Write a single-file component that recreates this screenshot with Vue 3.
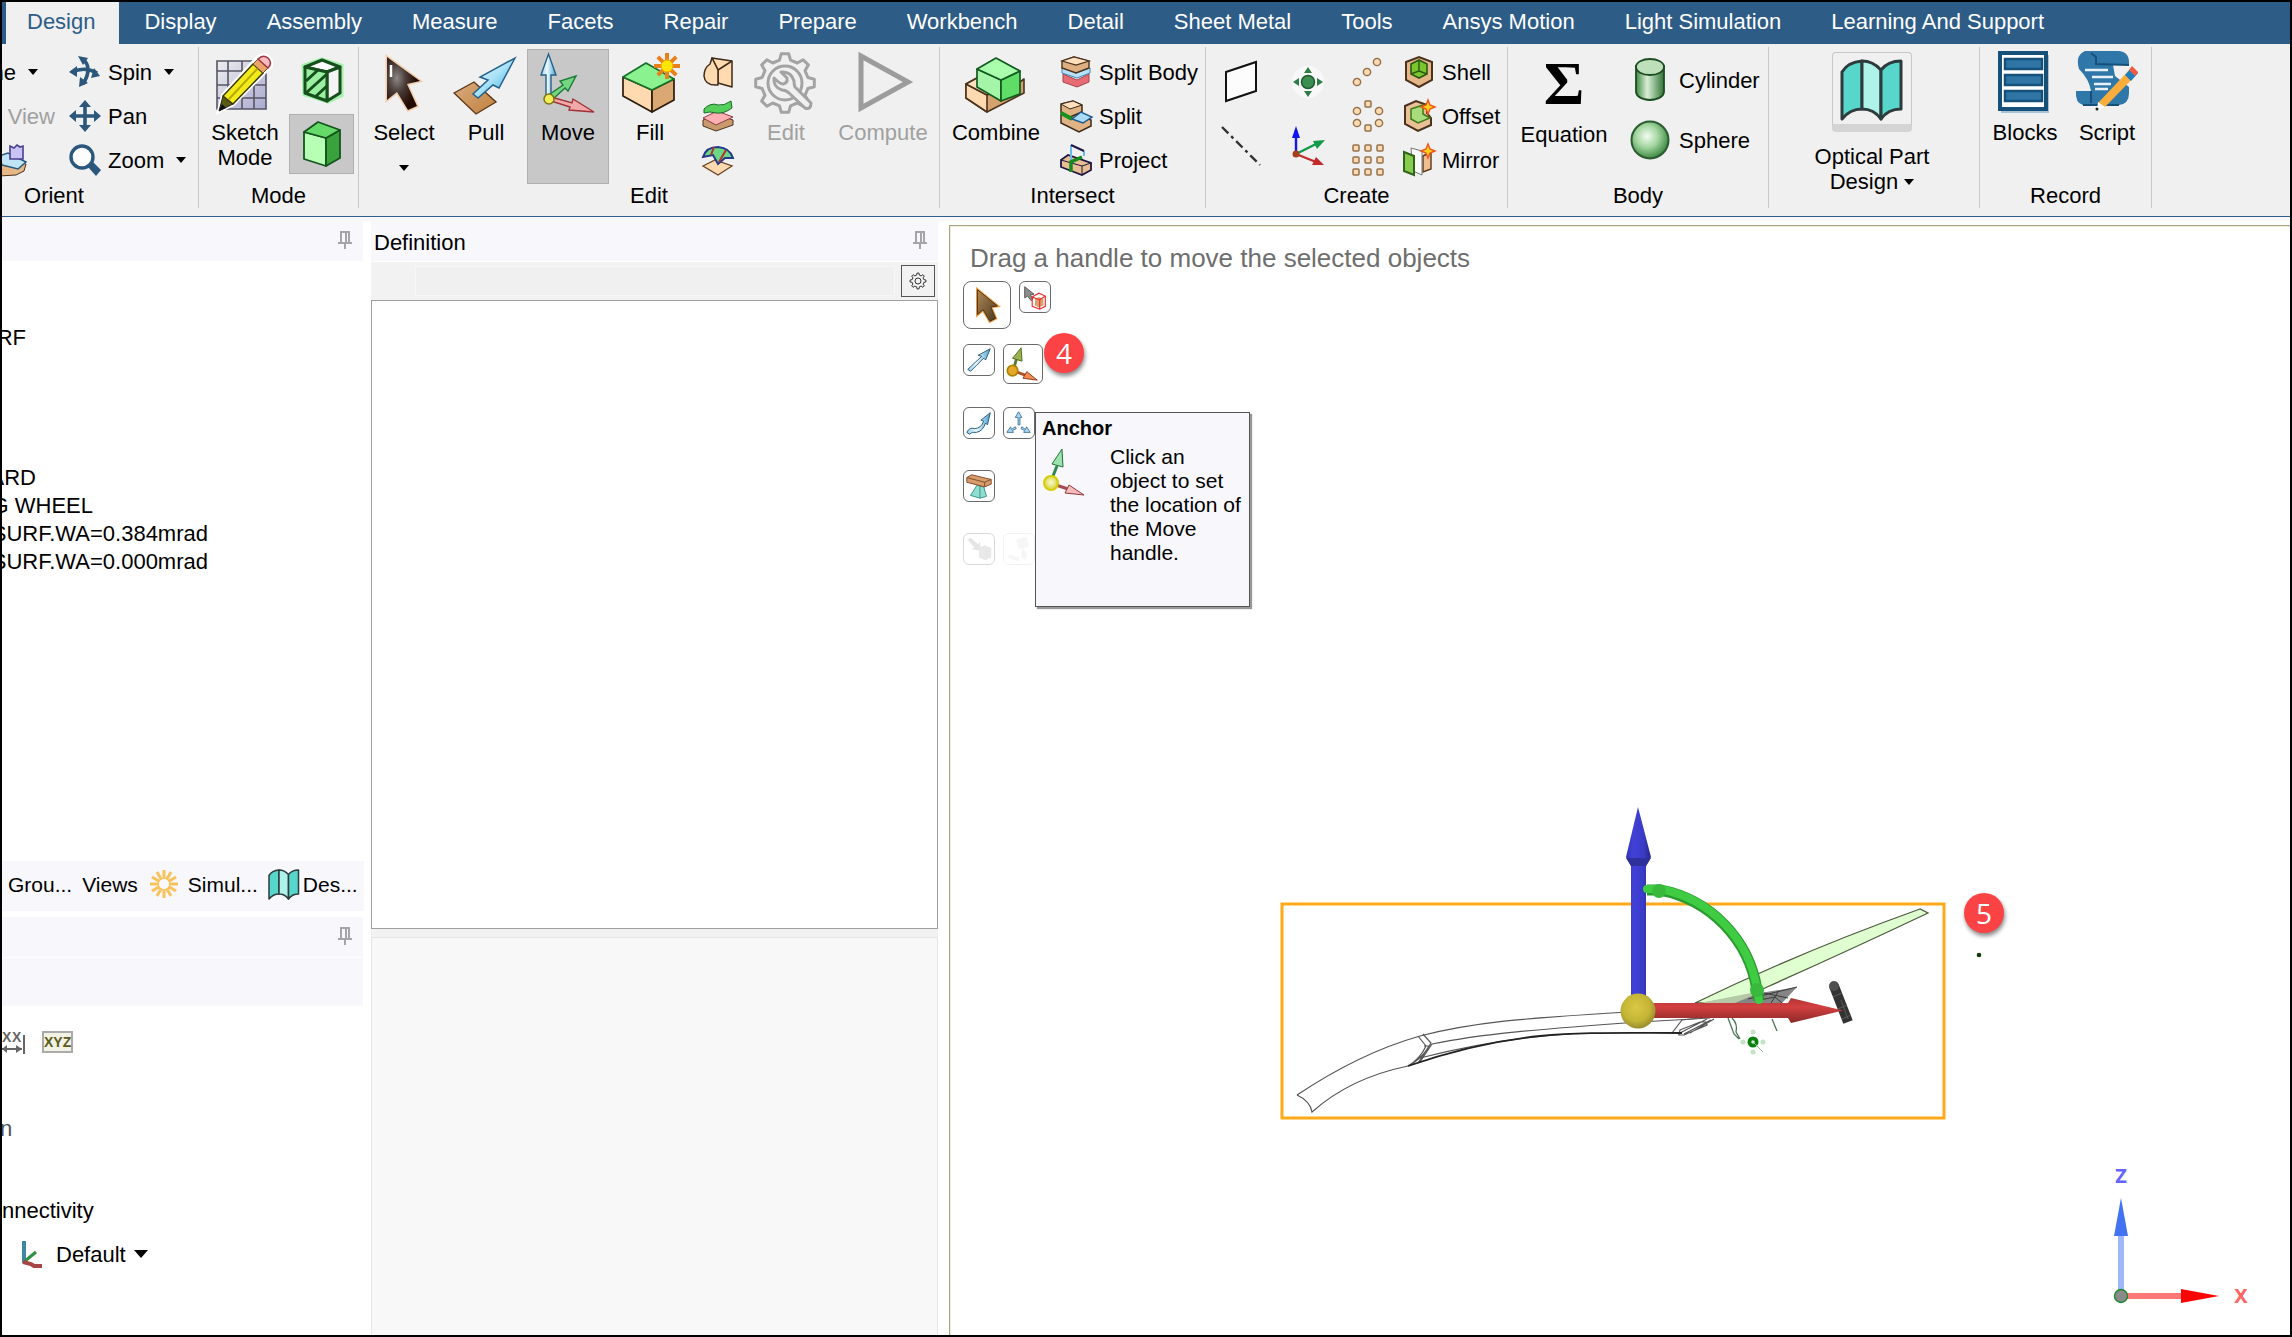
<script setup>
const tabs = [
  'Design', 'Display', 'Assembly', 'Measure', 'Facets', 'Repair', 'Prepare', 'Workbench',
  'Detail', 'Sheet Metal', 'Tools', 'Ansys Motion', 'Light Simulation', 'Learning And Support',
]

// Tree rows scroll off to the left; each entry knows where its text ends.
const tree = [
  { text: 'RF', end: 24, gap: true },
  { text: 'ARD', end: 34 },
  { text: 'G WHEEL', end: 91 },
  { text: 'SURF.WA=0.384mrad', end: 206 },
  { text: 'SURF.WA=0.000mrad', end: 206 },
]

function gear(cx, cy, outer, inner, teeth) {
  const pts = []
  const step = (Math.PI * 2) / teeth
  for (let i = 0; i < teeth; i++) {
    const a = i * step - Math.PI / 2
    const marks = [[-0.3, inner], [-0.16, outer], [0.16, outer], [0.3, inner]]
    for (const [k, r] of marks) {
      pts.push(`${(cx + r * Math.cos(a + k * step)).toFixed(1)} ${(cy + r * Math.sin(a + k * step)).toFixed(1)}`)
    }
  }
  return `M${pts.join('L')}Z`
}

function burst(cx, cy, r0, r1, rays) {
  let d = ''
  for (let i = 0; i < rays; i++) {
    const a = (i * Math.PI * 2) / rays
    d += `M${(cx + r0 * Math.cos(a)).toFixed(1)} ${(cy + r0 * Math.sin(a)).toFixed(1)}L${(cx + r1 * Math.cos(a)).toFixed(1)} ${(cy + r1 * Math.sin(a)).toFixed(1)}`
  }
  return d
}

const dots = (list, shape) => list.map(([x, y]) => shape === 'o'
  ? `<circle cx="${x}" cy="${y}" r="3.6"/><path d="M${x} ${y - 2.5}v5M${x - 2.5} ${y}h5" stroke="#ffd9b0"/>`
  : `<rect x="${x - 3}" y="${y - 3}" width="6" height="6" rx="1"/>`).join('')

const star = '<path d="M25 0l2 5 5 2-5 2-2 5-2-5-5-2 5-2z" fill="#ffd21c" stroke="#f2541b" stroke-width="1.4"/>'

const foldMap = '<g stroke="#2e3b3c" stroke-width="3" stroke-linejoin="round"><path d="M2 62V15Q8 5 22 4V52Q10 52 2 62Z" fill="#57d6cb"/><path d="M22 4Q33 4 41 13V62Q34 52 22 52Z" fill="#aef2ea"/><path d="M41 13Q48 4 61 4V52Q48 52 41 62Z" fill="#57d6cb"/></g>'

// 64 x 64 drawings
const big = {
  sketch: `<rect x="4" y="10" width="49" height="48" fill="url(#grid)"/><path d="M4 10h49v48H4zM15 10v48M29 10v48M41 10v48M4 20h49M4 34h49M4 47h49" fill="none" stroke="#555566" stroke-width="1.6"/><path d="M6 60L10 44 45 6Q54 1 58 10L58 15 20 53Z" fill="#fff" stroke="#fff" stroke-width="4"/><path d="M6 60L10 45 20 53Z" fill="#5c5a12" stroke="#222"/><path d="M10 45L40 13 50 22 20 53Z" fill="#f2ea1a" stroke="#3a3a00" stroke-width="1.5"/><path d="M16 48L45 17" stroke="#b5a800" stroke-width="2"/><path d="M40 13L45 8 55 17 50 22Z" fill="#e8a668" stroke="#6a4a2a"/><path d="M45 8Q50 3 55 7 60 12 55 17Z" fill="#f6bcc0" stroke="#a03540" stroke-width="1.5"/><path d="M6 60l3-7 4 4z" fill="#111"/>`,
  select: `<path d="M15 6V49L25 41 36 59 45 55 35 33 48 30Z" fill="url(#cursor)" stroke="#f3cfae" stroke-width="3"/><path d="M15 6V49L25 41 36 59 45 55 35 33 48 30Z" fill="url(#cursor)"/><path d="M19 14v12" stroke="#fff" stroke-width="2.5"/>`,
  pull: `<path d="M0 42L20 31 42 51 22 63Z" fill="url(#plate)" stroke="#5b3718" stroke-width="1.4"/><path d="M61 7L45 37 39 34 24 47 19 43 34 29 26 26Z" fill="url(#sky)" stroke="#24618c" stroke-width="1.5"/>`,
  move: `<path d="M10 46V24H5L12.500 3 20 24H15V46Z" fill="url(#skyH)" stroke="#276087" stroke-width="1.4"/><path d="M14 43L27 34 24 30 40 25 32 40 29 37 17 48Z" fill="#74d683" stroke="#1e7a38" stroke-width="1.4"/><path d="M15 46L36 52 37 48 58 61 33 59 34 56 15 50Z" fill="#f2a9a9" stroke="#a03238" stroke-width="1.4"/><circle cx="13" cy="48" r="5" fill="#f3ee58" stroke="#7c7614" stroke-width="1.5"/>`,
  fill: `<g stroke="#2d1c0c" stroke-width="1.7" stroke-linejoin="round"><path d="M5 26L34 39V61L5 45Z" fill="#ffd9b0"/><path d="M34 39L56 28V49L34 61Z" fill="#d9a873"/><path d="M5 26L28 12 56 28 34 39Z" fill="#8af28f" stroke="#17702a"/></g><path d="${burst(49, 15, 3, 13, 8)}" stroke="#e8811c" stroke-width="4"/><circle cx="49" cy="15" r="6" fill="#ffe600" stroke="#f6a400"/>`,
  gear: `<g fill="none" stroke="#a3a3a3" stroke-width="3" stroke-linejoin="round"><path d="${gear(31, 32, 29.500, 23.500, 8)}"/><circle cx="31" cy="32" r="17"/></g><path d="M20 27Q19 36 28 39 32 39 35 42L51 57Q57 59 57 52L41 36Q40 34 40 30 37 20 27 21L33 27Q34 32 29 33Q26 33 20 27Z" fill="#f0f0f0" stroke="#a3a3a3" stroke-width="3" stroke-linejoin="round"/>`,
  compute: `<path d="M10 5V57L57 31Z" fill="none" stroke="#9c9c9c" stroke-width="5"/>`,
  combine: `<g stroke="#4b321c" stroke-width="1.6" stroke-linejoin="round"><path d="M2 33L13 27 44 40 60 28V42L23 61 2 47Z" fill="#d3a26e"/><path d="M2 33L23 44V61L2 47Z" fill="#ffd9b0"/><path d="M2 33L13 27 37 38 23 44Z" fill="#ffe0bf"/></g><g stroke="#125a20" stroke-width="1.7" stroke-linejoin="round"><path d="M13 18L37 29V50L13 36Z" fill="#a5f5a8"/><path d="M37 29L56 20V43L37 50Z" fill="#5fdd66"/><path d="M13 18L32 7 56 20 37 29Z" fill="#a9ffac"/></g>`,
  map: foldMap,
  blocks: `<path d="M8 4h48v58H8z" fill="#a9c3d4"/><rect x="7" y="2" width="46" height="56" fill="#fff" stroke="#14507a" stroke-width="4"/><g fill="#2f74a5" stroke="#14507a" stroke-width="2.500"><rect x="12" y="8" width="37" height="10"/><rect x="12" y="24" width="37" height="10"/><rect x="12" y="40" width="37" height="10"/></g>`,
  script: `<path d="M10 0H44Q55 1 54 14H38L40 25 54 36V42Q54 53 44 54H8Q0 52 1 40H16Q14 28 4 18 0 4 10 0Z" fill="#2f77a8"/><path d="M16 2L21 6V13L54 14M16 40V52M8 54H44" fill="none" stroke="#14507a" stroke-width="2"/><path d="M10 19H33M17 26H38M19 33H36M20 38H33" stroke="#e8f1f7" stroke-width="2.500"/><path d="M57 16L63 22 30 56 23 52Z" fill="#fbad3c"/><path d="M50 24L57 16 63 22 56 30Z" fill="#1c7fbf"/><path d="M54 19L57 15 63 21 60 25Z" fill="#f25c45"/><path d="M23 51L30 56 22 59Z" fill="#fff"/><circle cx="22" cy="58" r="1.500" fill="#222"/>`,
}

// 32 x 32 drawings
const small = {
  spin: `<g fill="none" stroke="#2b577d" stroke-width="3.600"><path d="M3 16Q16 10 28 17M14 3Q24 12 14 28"/></g><path d="M0 16l8-6v11zM31 20l-9 2 3-10zM9 0l10 2-5 7zM10 31l1-10 8 6z" fill="#2b577d"/>`,
  pan: `<path d="M16 4V28M4 16H28" stroke="#2b577d" stroke-width="3.600"/><path d="M16 0l6 7H10zM16 32l6-7H10zM0 16l7-6v12zM32 16l-7-6v12z" fill="#2b577d"/>`,
  zoom: `<path d="M20 20l4-2 8 8-5 6-8-9z" fill="#2b577d"/><circle cx="13" cy="13" r="11" fill="#fdfdfe" stroke="#2b577d" stroke-width="3.400"/>`,
  snap: `<path d="M0 22L8 15 30 20 28 27 20 31 3 32Z" fill="#e6b887" stroke="#4b321c"/><path d="M3 12L12 9 30 18 22 25 6 21Z" fill="#bfe4f7" stroke="#27587a" stroke-width="1.500"/><path d="M14 15V2L18 4 21 1 24 3 27 2V15Z" fill="#c9c3f5" stroke="#49408f" stroke-width="1.600"/>`,
  blend: `<g fill="#ffd9b0" stroke="#3c2a18" stroke-width="1.500" stroke-linejoin="round"><path d="M10 2L30 5V31L16 27V14Z"/><path d="M10 2L8 8Q2 12 2 20 3 30 16 29V14Z"/><path d="M16 14L30 5"/></g>`,
  lift: `<path d="M1 20L14 14 31 20V25L14 31 1 26Z" fill="#c99a6d" stroke="#4b321c"/><path d="M1 18L15 11 31 17 14 25Z" fill="#ffb0b4" stroke="#8f3b40"/><path d="M2 9Q9 2 16 5 22 6 29 1L30 8Q22 14 14 13 8 11 2 13Z" fill="#54cf5a" stroke="#1c6a2a"/>`,
  drape: `<path d="M1 22L13 16 30 22 16 31Z" fill="#ffd9b0" stroke="#6b4423" stroke-width="1.300"/><path d="M1 13Q4 3 16 3 28 4 31 14L23 14 16 20 11 11Z" fill="#6bd884" stroke="#243a8c" stroke-width="2"/><path d="M9 11L12 3M17 18L24 6" stroke="#b3302f" stroke-width="2"/>`,
  splitBody: `<path d="M3 18L17 24 29 18V26L17 31 3 26Z" fill="#e86b74" stroke="#a4444c"/><path d="M2 11L16 17 30 12V17L17 22 2 17Z" fill="#b8e2fa" stroke="#3c86b5"/><path d="M2 5L14 1 29 5V12L16 17 2 12Z" fill="#deb081" stroke="#4b321c" stroke-width="1.400"/><path d="M2 5L14 1 29 5 16 9Z" fill="#ffdfbc" stroke="#4b321c" stroke-width="1.200"/>`,
  split: `<path d="M1 15L10 12 31 20V26L19 32 1 23Z" fill="#e0b384" stroke="#3c2a18" stroke-width="1.500"/><path d="M1 4L13 1 22 5V12L10 17 1 13Z" fill="#e0b384" stroke="#3c2a18" stroke-width="1.500"/><path d="M1 4L13 1 22 5 10 9Z" fill="#ffdfbc" stroke="#3c2a18"/><path d="M1 13l11 6" stroke="#14921d" stroke-width="4"/><path d="M12 19L21 12 32 17 23 23Z" fill="#a8dcfa" stroke="#20588a" stroke-width="1.500"/>`,
  project: `<path d="M1 16L8 11 31 19V26L22 31 1 23Z" fill="#e8bd91" stroke="#1d1742" stroke-width="1.800"/><path d="M22 22V31M22 22L31 19M1 16L22 22" stroke="#1d1742" fill="none"/><path d="M11 1V16M24 7V12" fill="none" stroke="#67b9ee" stroke-width="2"/><path d="M11 1L24 7" stroke="#1d1742" stroke-width="2"/><path d="M11 28V18L22 13" fill="none" stroke="#128a20" stroke-width="3.500"/>`,
  patLine: `<g fill="#ffd9b0" stroke="#94714c" stroke-width="1.500">${dots([[5, 26], [15, 16], [25, 6]], 'o')}</g>`,
  patCircle: `<g fill="#ffd9b0" stroke="#94714c" stroke-width="1.500">${dots([[16, 4], [16, 28]], 's')}${dots([[5, 11], [27, 11], [5, 23], [27, 23]], 'o')}</g>`,
  patGrid: `<g fill="#ffd9b0" stroke="#94714c" stroke-width="1.500">${dots([[4, 4], [16, 4], [28, 4], [4, 16], [16, 16], [28, 16], [4, 28], [16, 28], [28, 28]], 's')}</g>`,
  shell: `<path d="M3 6L16 1 29 6V24L16 31 3 24Z" fill="#e5b788" stroke="#4b321c" stroke-width="2"/><path d="M8 8L16 4 24 8V18L16 22 8 18Z" fill="#7ac62f" stroke="#2b5a10" stroke-width="1.600"/><path d="M16 4V15L8 18M16 15L24 18" fill="none" stroke="#2b5a10" stroke-width="1.400"/>`,
  offset: `<path d="M2 6L13 1 24 5V13L28 18V25L15 31 2 24Z" fill="#eac095" stroke="#4b321c" stroke-width="2"/><path d="M8 9L20 5V14L27 18 15 23 8 19Z" fill="#a8dc7c" stroke="#3f7a1a" stroke-width="1.500"/>${star}`,
  mirror: `<path d="M20 12L28 8V25L20 28Z" fill="#f0bf91" stroke="#5b3718" stroke-width="1.400"/><path d="M8 4L19 7V31L10 27Z" fill="#fafafa" stroke="#777"/><path d="M1 8L11 12V31L1 27Z" fill="#86cc4f" stroke="#2f641a" stroke-width="2"/>${star}`,
}

// 44 x 48 drawings
const mid = {
  section: `<path d="M4 9L22 3 41 9V38L28 44 5 37Z" fill="none" stroke="#a5f0ac" stroke-width="5"/><g stroke="#164f1c" stroke-width="3" stroke-linejoin="round"><path d="M5 10L22 3 40 10 27 15Z" fill="#fff"/><path d="M27 15L40 10V36L27 44Z" fill="#f4f4f4"/><path d="M5 10L27 15V44L5 36Z" fill="#9af0a0"/><path d="M6 24L18 13M6 36L27 17M15 40L27 29"/></g>`,
  solid: `<g stroke="#14541c" stroke-width="1.800" stroke-linejoin="round"><path d="M4 12L26 18V46L4 39Z" fill="#b6ffb4"/><path d="M26 18L40 10V38L26 46Z" fill="#3aa23c"/><path d="M4 12L18 2 40 10 26 18Z" fill="#66da68"/></g>`,
  plane: `<path d="M7 14L37 4V33L7 43Z" fill="#fcfcfc" stroke="#111" stroke-width="2"/>`,
  axis: `<path d="M3 5L41 43" stroke="#333" stroke-width="2.400" stroke-dasharray="9 4 3 4"/>`,
  point: `<circle cx="22" cy="24" r="16" fill="#f8f8f8"/><circle cx="22" cy="24" r="6.500" fill="#3d8f51" stroke="#1e5c30" stroke-width="1.500"/><path d="M22 9l4 6h-8zM22 39l4-6h-8zM7 24l6-4v8zM37 24l-6-4v8z" fill="#2f7d46"/>`,
  origin: `<path d="M10 32V8" stroke="#1414f0" stroke-width="2.400"/><path d="M10 4l4 12H6z" fill="#1414f0"/><path d="M10 32L32 21" stroke="#12994a" stroke-width="2.400"/><path d="M39 18L31 27 27 19Z" fill="#12994a"/><path d="M10 32L30 40" stroke="#c22a2c" stroke-width="2.400"/><path d="M38 43L26 43 30 35Z" fill="#c22a2c"/><circle cx="10" cy="32" r="3.500" fill="#a6401a"/>`,
  cylinder: `<path d="M8 10V36Q9 43 22 44 35 43 36 36V10Z" fill="url(#tube)" stroke="#1c4d22" stroke-width="1.800"/><ellipse cx="22" cy="11" rx="14" ry="8" fill="#bfdfba" stroke="#1c4d22" stroke-width="1.800"/>`,
  sphere: `<circle cx="22" cy="24" r="18.500" fill="url(#ball)" stroke="#2b5c30" stroke-width="2"/>`,
}

const rows = (list) => list.map(([icon, label, menu]) => ({ icon, label, menu }))
const orient = rows([['spin', 'Spin', true], ['pan', 'Pan', false], ['zoom', 'Zoom', true]])
const intersect = rows([['splitBody', 'Split Body'], ['split', 'Split'], ['project', 'Project']])
const modify = rows([['shell', 'Shell'], ['offset', 'Offset'], ['mirror', 'Mirror']])

// Tool guides of the Move tool, row by row
const guides = [
  [
    { name: 'Select', size: 'lg', box: '0 0 48 48', art: '<path d="M14 8V34L20 29 27 41 33 38 28 26 35 25Z" fill="#8b6a3e" stroke="#f0a04b" stroke-width="3"/><path d="M14 8V34L20 29 27 41 33 38 28 26 35 25Z" fill="url(#bronze)" stroke="#4b3010"/>' },
    { name: 'Select component', size: 'sm', box: '0 0 32 32', art: '<path d="M5 5V17L8 15 12 20 14 18 11 14 15 13Z" fill="#8c8c8c" stroke="#555"/><path d="M16 18L20 16 25 18V25L20 27 16 25Z" fill="#d9a070"/><path d="M13 16L20 12 27 15V26L21 29 13 26ZM13 16L21 19 27 15M21 19V29" fill="none" stroke="#ee2b2b" stroke-width="1.200"/>' },
  ],
  [
    { name: 'Move direction', size: 'sm', box: '0 0 32 32', art: '<path d="M4 26L19 12 15 11 28 4 23 16 21 14 7 28Z" fill="url(#skyH)" stroke="#27587a"/>' },
    { name: 'Anchor', size: 'md', box: '0 0 40 40', art: '<path d="M10 26L13 15" stroke="#557a30" stroke-width="3"/><path d="M18 3L19 17 9 14Z" fill="#9fae4f" stroke="#476b23"/><path d="M12 28L23 32" stroke="#b0512a" stroke-width="3"/><path d="M35 37L20 35 24 28Z" fill="#ef8a52" stroke="#8f3b1c"/><circle cx="9" cy="27" r="5.500" fill="#e9a72a" stroke="#a98500" stroke-width="1.800"/>' },
  ],
  [
    { name: 'Move along trajectory', size: 'sm', box: '0 0 32 32', art: '<path d="M3 26Q6 20 11 22 18 22 21 14L18 13 28 5 25 18 23 16Q20 25 13 26 8 25 6 28Z" fill="url(#skyH)" stroke="#27587a"/>' },
    { name: 'Move radially', size: 'sm', box: '0 0 32 32', art: '<g fill="#a9d9f3" stroke="#46789b"><path d="M15 18V10H12L15.500 4 19 10H17V18Z"/><path d="M12 20L8 23 7 20 3 26 10 26 9 24 13 22Z"/><path d="M19 20L23 23 24 20 28 26 21 26 22 24 18 22Z"/></g>' },
  ],
  [
    { name: 'Fulcrum', size: 'sm', box: '0 0 32 32', art: '<path d="M14 15L21 17 24 27 17 29 7 26Z" fill="#8edfd2" stroke="#3a8f86"/><path d="M17 16L17 29" stroke="#3a8f86"/><path d="M3 7L8 4 29 9V14L22 17 3 12Z" fill="#d99c6c" stroke="#7a4a26"/><path d="M3 7L22 12V17M22 12L29 9" fill="none" stroke="#7a4a26"/>' },
  ],
  [
    { name: 'Up to', size: 'sm off', box: '0 0 32 32', art: '<path d="M4 6L7 4 15 11 17 8 18 18 8 16 11 14Z" fill="#9a9a9a"/><path d="M16 15L22 12 29 15V25L23 28 16 25Z" fill="#a8a8a8"/>' },
    { name: 'Orient to object', size: 'sm faint', box: '0 0 32 32', art: '<path d="M13 6L24 3 27 13 16 16Z" fill="#999"/><path d="M20 15L25 22 22 28 18 24Z" fill="#999"/><path d="M5 24L16 27" stroke="#999" stroke-width="4"/>' },
  ],
]
</script>

<template>
  <div class="app">
    <svg class="defs" aria-hidden="true">
      <defs>
        <linearGradient id="grid" x1="0" y1="0" x2="1" y2="1"><stop offset="0" stop-color="#eeeeee" /><stop offset="1" stop-color="#a9a9d0" /></linearGradient>
        <radialGradient id="cursor" cx=".3" cy=".4" r=".6"><stop offset="0" stop-color="#8d8886" /><stop offset=".45" stop-color="#4a3c38" /><stop offset="1" stop-color="#240a02" /></radialGradient>
        <linearGradient id="plate" x1="0" y1="0" x2="1" y2="1"><stop offset="0" stop-color="#d9ad80" /><stop offset="1" stop-color="#c07f3d" /></linearGradient>
        <linearGradient id="sky" x1="0" y1="0" x2="1" y2="1"><stop offset="0" stop-color="#f2fbff" /><stop offset=".5" stop-color="#a8e2f8" /><stop offset="1" stop-color="#2b9fd2" /></linearGradient>
        <linearGradient id="skyH"><stop offset="0" stop-color="#8fcdec" /><stop offset=".4" stop-color="#eefaff" /><stop offset="1" stop-color="#4aa3d0" /></linearGradient>
        <linearGradient id="bronze" x1="0" y1="0" x2="1" y2="1"><stop offset="0" stop-color="#b08a55" /><stop offset="1" stop-color="#4a3720" /></linearGradient>
        <linearGradient id="tube"><stop offset="0" stop-color="#3f8a42" /><stop offset=".4" stop-color="#d9efd6" /><stop offset="1" stop-color="#2f7434" /></linearGradient>
        <radialGradient id="ball" cx=".42" cy=".4" r=".6"><stop offset="0" stop-color="#f4fbf3" /><stop offset=".5" stop-color="#a3d6a0" /><stop offset="1" stop-color="#3f8a45" /></radialGradient>
        <radialGradient id="yellow" cx=".45" cy=".4" r=".65"><stop offset="0" stop-color="#d8c843" /><stop offset=".6" stop-color="#c5b537" /><stop offset="1" stop-color="#8f832a" /></radialGradient>
        <radialGradient id="lemon" cx=".5" cy=".45" r=".6"><stop offset="0" stop-color="#fbfad0" /><stop offset="1" stop-color="#d0cc2a" /></radialGradient>
        <linearGradient id="blueRod"><stop offset="0" stop-color="#3434b8" /><stop offset=".3" stop-color="#4141d8" /><stop offset=".7" stop-color="#3a3ac6" /><stop offset="1" stop-color="#282888" /></linearGradient>
        <linearGradient id="redRod" x1="0" y1="0" x2="0" y2="1"><stop offset="0" stop-color="#b43434" /><stop offset=".35" stop-color="#d34040" /><stop offset="1" stop-color="#8c2828" /></linearGradient>
      </defs>
    </svg>

    <nav class="tabs">
      <a v-for="(t, i) in tabs" :key="t" href="#" :class="{ on: i === 0 }">{{ t }}</a>
    </nav>

    <div class="ribbon">
      <section class="group orient">
        <div class="body">
          <div class="stack left">
            <button class="item">Home <i class="caret"></i></button>
            <button class="item dim" disabled>Plan View</button>
            <button class="item" aria-label="Snap View"><svg class="s32" viewBox="0 0 32 32" v-html="small.snap"></svg></button>
          </div>
          <div class="stack">
            <button v-for="r in orient" :key="r.label" class="item">
              <svg class="s32" viewBox="0 0 32 32" v-html="small[r.icon]"></svg>{{ r.label }}<i v-if="r.menu" class="caret"></i>
            </button>
          </div>
        </div>
        <h2>Orient</h2>
      </section>

      <section class="group mode">
        <div class="body">
          <button class="tool"><svg class="s64" viewBox="0 0 64 64" v-html="big.sketch"></svg><span>Sketch<br>Mode</span></button>
          <div class="modes">
            <button class="square" aria-label="Section Mode"><svg class="s44" viewBox="0 0 44 48" v-html="mid.section"></svg></button>
            <button class="square pressed" aria-label="3D Mode"><svg class="s44" viewBox="0 0 44 48" v-html="mid.solid"></svg></button>
          </div>
        </div>
        <h2>Mode</h2>
      </section>

      <section class="group edit">
        <div class="body">
          <button class="tool"><svg class="s64" viewBox="0 0 64 64" v-html="big.select"></svg><span>Select</span><i class="caret low"></i></button>
          <button class="tool"><svg class="s64" viewBox="0 0 64 64" v-html="big.pull"></svg><span>Pull</span></button>
          <button class="tool pressed"><svg class="s64" viewBox="0 0 64 64" v-html="big.move"></svg><span>Move</span></button>
          <button class="tool"><svg class="s64" viewBox="0 0 64 64" v-html="big.fill"></svg><span>Fill</span></button>
          <div class="stack center">
            <button v-for="n in ['blend', 'lift', 'drape']" :key="n" class="item" :aria-label="n"><svg class="s32" viewBox="0 0 32 32" v-html="small[n]"></svg></button>
          </div>
          <button class="tool dim" disabled><svg class="s64" viewBox="0 0 64 64" v-html="big.gear"></svg><span>Edit</span></button>
          <button class="tool wide dim" disabled><svg class="s64" viewBox="0 0 64 64" v-html="big.compute"></svg><span>Compute</span></button>
        </div>
        <h2>Edit</h2>
      </section>

      <section class="group intersect">
        <div class="body">
          <button class="tool wide"><svg class="s64" viewBox="0 0 64 64" v-html="big.combine"></svg><span>Combine</span></button>
          <div class="stack">
            <button v-for="r in intersect" :key="r.label" class="item"><svg class="s32" viewBox="0 0 32 32" v-html="small[r.icon]"></svg>{{ r.label }}</button>
          </div>
        </div>
        <h2>Intersect</h2>
      </section>

      <section class="group create">
        <div class="body">
          <div class="pairs">
            <button v-for="n in ['plane', 'point', 'axis', 'origin']" :key="n" class="bare" :aria-label="n"><svg class="s44" viewBox="0 0 44 48" v-html="mid[n]"></svg></button>
          </div>
          <div class="stack patterns">
            <button v-for="n in ['patLine', 'patCircle', 'patGrid']" :key="n" class="item" :aria-label="n"><svg class="s32" viewBox="0 0 32 32" v-html="small[n]"></svg></button>
          </div>
          <div class="stack">
            <button v-for="r in modify" :key="r.label" class="item"><svg class="s32" viewBox="0 0 32 32" v-html="small[r.icon]"></svg>{{ r.label }}</button>
          </div>
        </div>
        <h2>Create</h2>
      </section>

      <section class="group solids">
        <div class="body">
          <button class="tool wide"><b class="sigma">Σ</b><span>Equation</span></button>
          <div class="shapes">
            <button class="item"><svg class="s44" viewBox="0 0 44 48" v-html="mid.cylinder"></svg>Cylinder</button>
            <button class="item"><svg class="s44" viewBox="0 0 44 48" v-html="mid.sphere"></svg>Sphere</button>
          </div>
        </div>
        <h2>Body</h2>
      </section>

      <section class="group optical">
        <button class="opd">
          <span class="frame"><svg class="s64" viewBox="0 0 64 64" v-html="big.map"></svg></span>
          <span>Optical Part<br>Design <i class="caret raised"></i></span>
        </button>
      </section>

      <section class="group record">
        <div class="body">
          <button class="tool"><svg class="s64" viewBox="0 0 64 64" v-html="big.blocks"></svg><span>Blocks</span></button>
          <button class="tool"><svg class="s64" viewBox="0 0 64 64" v-html="big.script"></svg><span>Script</span></button>
        </div>
        <h2>Record</h2>
      </section>
    </div>

    <main class="work">
      <aside class="side">
        <header class="bar"><svg class="pin" viewBox="0 0 14 18"><path d="M3 1h8v11H3zM8 1v11M0 12h14M7 12v6" /></svg></header>
        <ul class="tree">
          <li v-for="row in tree" :key="row.text" :class="{ gap: row.gap }"><span :style="{ width: row.end + 'px' }">{{ row.text }}</span></li>
        </ul>
        <nav class="panels">
          <a href="#">Grou...</a>
          <a href="#">Views</a>
          <a href="#"><svg class="s32" viewBox="0 0 32 32"><path :d="burst(16, 16, 5, 14, 12)" stroke="#f9c35c" stroke-width="3" /></svg>Simul...</a>
          <a href="#" class="tight"><svg class="s32" viewBox="0 0 64 64" v-html="big.map"></svg>Des...</a>
        </nav>
        <section class="props">
          <header class="bar"><svg class="pin" viewBox="0 0 14 18"><path d="M3 1h8v11H3zM8 1v11M0 12h14M7 12v6" /></svg></header>
          <div class="strip"></div>
          <div class="marks">
            <svg width="22" height="26" viewBox="0 0 22 26"><path d="M0 20h20M22 6v19" stroke="#666" stroke-width="2" /><path d="M0 20l5-4v8zM20 20l-6-4v8z" fill="#666" /><text x="0" y="13">X</text><text x="10" y="13">X</text></svg>
            <span class="xyz">XYZ</span>
          </div>
          <p class="muted">n</p>
          <p class="conn">nnectivity</p>
          <button class="default">
            <svg width="24" height="28" viewBox="0 0 24 28"><path d="M4 1v22" stroke="#3f87a8" stroke-width="4" /><path d="M5 21L16 12" stroke="#2f8f40" stroke-width="3" /><path d="M3 22l8 2 3 2h8" stroke="#a84545" stroke-width="4" fill="none" /></svg>
            Default <i class="caret wide"></i>
          </button>
        </section>
      </aside>

      <section class="defn">
        <header class="bar">Definition<svg class="pin" viewBox="0 0 14 18"><path d="M3 1h8v11H3zM8 1v11M0 12h14M7 12v6" /></svg></header>
        <div class="tray"><div class="slot"></div><button class="cog" aria-label="Settings"><svg width="18" height="18" viewBox="0 0 18 18"><path :d="gear(9, 9, 8, 6, 8)" /><circle cx="9" cy="9" r="3" /></svg></button></div>
        <div class="list"></div>
        <div class="detail"></div>
      </section>

      <section class="view">
        <p class="prompt">Drag a handle to move the selected objects</p>
        <div class="guides">
          <div v-for="(line, i) in guides" :key="i" class="line">
            <button v-for="g in line" :key="g.name" :class="['guide', g.size]" :aria-label="g.name"><svg :viewBox="g.box" v-html="g.art"></svg></button>
          </div>
        </div>

        <svg class="model" viewBox="1270 780 760 350">
          <rect x="1282" y="904" width="662" height="214" fill="none" stroke="#ffa918" stroke-width="3" />
          <g fill="none" stroke="#555" stroke-width="1.200">
            <path d="M1297 1095Q1360 1053 1420 1036C1490 1018 1560 1017 1640 1011" />
            <path d="M1297 1095Q1310 1101 1312 1112Q1350 1078 1408 1066" />
            <path d="M1432 1044C1480 1034 1540 1029 1640 1022L1710 1018" />
            <path d="M1418 1036L1426 1046Q1420 1059 1408 1066M1423 1034L1431 1043Q1424 1056 1412 1064M1424 1046H1429L1418 1063M1432 1044L1420 1062" />
            <path d="M1420 1058Q1500 1038 1570 1034" />
            <path d="M1672 1033L1682 1020L1700 1018M1678 1034L1707 1019M1684 1034L1711 1020M1690 1033L1714 1019M1680 1030L1700 1022H1707V1025L1684 1035H1679Z" />
          </g>
          <path d="M1408 1066C1460 1048 1500 1040 1540 1036S1620 1033 1682 1033" fill="none" stroke="#222" stroke-width="1.800" />
          <path d="M1695 1003Q1800 952 1920 909L1928 913Q1850 950 1767 987L1735 1003Z" fill="#e0ffd0" stroke="#4e5c40" stroke-width="1.300" />
          <path d="M1700 1003L1797 987 1782 1003Z" fill="#858585" />
          <path d="M1700 1003L1766 990 1735 1003Z" fill="#b5c9a6" />
          <path d="M1748 999L1797 987M1755 1001L1775 997L1782 1003M1778 992L1771 1003M1764 993L1788 998" stroke="#3b3b3b" fill="none" />
          <path d="M1732 1018Q1738 1024 1736 1032L1740 1039M1728 1018L1734 1034L1739 1039M1772 1019L1777 1031" fill="none" stroke="#4d7754" stroke-width="1.300" />
          <path d="M1834 986L1848 1022" stroke="#333" stroke-width="10" />
          <path d="M1833 997l9-4M1838 1009l9-4M1842 1019l9-4M1841 1000l7 19" stroke="#5c5c5c" />
          <circle cx="1834" cy="986" r="5" fill="#505050" />
          <path d="M1638 807L1651 857 1646 866V1000H1631V866L1626 857Z" fill="url(#blueRod)" />
          <path d="M1626 858H1651L1646 866H1631Z" fill="#30309c" />
          <path d="M1650 1003H1788L1791 998 1843 1010.500 1791 1023 1788 1018H1650Z" fill="url(#redRod)" />
          <path d="M1647 890H1660A121 121 0 0 1 1757 990L1759 1000" fill="none" stroke="#2a9b2f" stroke-width="11" />
          <path d="M1647 889H1660A121 121 0 0 1 1757 990L1759 1000" fill="none" stroke="#3fcb42" stroke-width="8" stroke-linecap="round" />
          <circle cx="1659" cy="891" r="7" fill="#38b93b" />
          <circle cx="1757" cy="990" r="7" fill="#38b93b" />
          <circle cx="1638" cy="1011" r="17.500" fill="url(#yellow)" />
          <g fill="#c3e3c4"><circle cx="1753" cy="1032" r="2.500" /><circle cx="1753" cy="1052" r="2.500" /><circle cx="1743" cy="1042" r="2.500" /><circle cx="1763" cy="1042" r="2.500" /></g>
          <circle cx="1753" cy="1042" r="5.500" fill="#07800b" />
          <path d="M1752 1041L1763 1052" stroke="#8fb592" />
          <circle cx="1753" cy="1042" r="1.800" fill="#cfe8cf" />
          <circle cx="1979" cy="955" r="2.300" fill="#0c3d0e" />
        </svg>

        <svg class="triad" viewBox="2100 1160 160 150">
          <path d="M2118 1235h6v58h-6z" fill="#9fb8fb" />
          <path d="M2121 1198L2128 1236H2114Z" fill="#4273f0" />
          <path d="M2126 1293h56v6h-56z" fill="#ff7878" />
          <path d="M2219 1296L2181 1303V1289Z" fill="#fb0404" />
          <circle cx="2121" cy="1296" r="6.500" fill="#8a8a8a" stroke="#1a8a2c" stroke-width="1.400" />
          <text x="2121" y="1183" fill="#6464ff">Z</text>
          <text x="2241" y="1303" fill="#ff6464">X</text>
        </svg>

        <div class="tip" role="tooltip">
          <strong>Anchor</strong>
          <div>
            <svg width="48" height="52" viewBox="0 0 48 52"><path d="M11 29L15 19" stroke="#2f8a50" stroke-width="3" /><path d="M20 2L21 20 10 17Z" fill="#9be3ae" stroke="#23713c" /><path d="M14 38L26 42" stroke="#a84a50" stroke-width="3" /><path d="M42 48L23 46 27 38Z" fill="#f6bcbc" stroke="#93383e" /><circle cx="9" cy="36" r="7" fill="url(#lemon)" stroke="#d5cf00" stroke-width="2" /></svg>
            <p>Click an object to set the location of the Move handle.</p>
          </div>
        </div>
        <span class="badge four">4</span>
        <span class="badge five">5</span>
      </section>
    </main>
  </div>
</template>

<style>
body { margin: 0; }
</style>

<style scoped>
.app {
  box-sizing: border-box;
  min-height: 100vh;
  border: 2px solid #000;
  display: flex;
  flex-direction: column;
  overflow: hidden;
  position: relative;
  background: #fff;
  color: #000;
  font: 22px/25px "Liberation Sans", Arial, sans-serif;
}
.defs { position: absolute; width: 0; height: 0; }
button { font: inherit; color: inherit; background: none; border: 1px solid transparent; padding: 0; margin: 0; box-sizing: border-box; }
a { color: inherit; text-decoration: none; }
svg { display: block; flex: none; overflow: visible; }
h2, p, ul { margin: 0; padding: 0; font-weight: normal; font-size: inherit; list-style: none; }
.s32 { width: 32px; height: 32px; }
.s44 { width: 44px; height: 48px; }
.s64 { width: 64px; height: 64px; }
.caret { display: inline-block; border: 5px solid transparent; border-top: 6px solid #000; border-bottom: 0; flex: none; }
.caret.wide { border-width: 8px 7px 0; }
.caret.raised { vertical-align: 4px; }

.tabs { display: flex; height: 42px; background: #2d5c87; color: #fff; padding-left: 4px; white-space: nowrap; }
.tabs a { padding: 0 25px; line-height: 40px; }
.tabs a.on { background: #f0f0f0; color: #2d5c87; padding: 0 24px 0 21px; }

.ribbon { display: flex; height: 172px; background: #f0f0f0; border-bottom: 1px solid #2f5f8a; white-space: nowrap; }
.group { flex: none; box-sizing: border-box; height: 161px; margin-top: 3px; border-right: 1px solid #c8c8c8; display: flex; flex-direction: column; justify-content: space-between; }
.group h2 { text-align: center; line-height: 24px; }
.body { display: flex; padding-top: 2px; height: 135px; }
.orient { width: 289px; margin-left: -92px; }
.mode { width: 160px; }
.edit { width: 581px; }
.intersect { width: 266px; }
.create { width: 302px; }
.solids { width: 261px; }
.optical { width: 211px; }
.record { width: 172px; }

.stack { display: flex; flex-direction: column; padding-top: 1px; }
.item { display: flex; align-items: center; gap: 7px; height: 44px; text-align: left; }
.item .caret { margin-left: 5px; }
.dim { color: #a0a0a0; }
.tool { width: 82px; height: 135px; padding-top: 1px; display: flex; flex-direction: column; align-items: center; gap: 5px; }
.tool.wide { width: 112px; }
.pressed { background: #c8c8c8; border-color: #b0b0b0; }
.low { margin-top: 15px; }

.orient .left { width: 146px; align-items: flex-end; margin-right: 12px; }
.left .item:nth-child(1) { margin-right: 17px; }
.left .item:nth-child(3) { margin-right: 27px; }
.mode .tool { margin-left: 5px; }
.modes { display: flex; flex-direction: column; gap: 3px; padding: 2px 0 0 3px; }
.square { width: 65px; height: 60px; display: flex; align-items: center; justify-content: center; }
.edit .body { padding-left: 4px; }
.center { width: 54px; align-items: center; }
.intersect .stack { padding-left: 7px; }
.pairs { display: grid; grid-template-columns: 44px 44px; gap: 16px 23px; padding: 9px 0 0 13px; align-content: start; }
.bare { border: 0; height: 48px; }
.patterns { padding: 1px 17px 0 21px; }
.solids .tool { gap: 7px; }
.sigma { font: bold 62px/64px "Liberation Serif", serif; height: 64px; }
.shapes { display: flex; flex-direction: column; gap: 16px; padding: 9px 0 0 7px; }
.opd { display: flex; flex-direction: column; align-items: center; gap: 12px; padding-top: 4px; margin-right: 4px; }
.frame { width: 80px; height: 80px; box-sizing: border-box; border: 1px solid #c8c8c8; border-bottom: 8px solid #d4d4d4; border-radius: 4px; display: flex; justify-content: center; align-items: center; }
.record .body { padding-left: 4px; }

.work { flex: 1; display: flex; border-top: 4px solid #f7f7fc; }
.bar { box-sizing: border-box; height: 40px; background: #f7f7fc; display: flex; align-items: center; justify-content: space-between; padding: 2px 11px 0 3px; flex: none; }
.pin { width: 14px; height: 18px; margin-left: auto; margin-bottom: 4px; }
.pin path { fill: none; stroke: #a5a5a8; stroke-width: 2; }
.side { width: 362px; flex: none; display: flex; flex-direction: column; overflow: hidden; }
.side .bar { width: 361px; }
.tree { flex: 1; padding-top: 63px; }
.tree li { height: 28px; line-height: 28px; }
.tree li.gap { margin-bottom: 112px; }
.tree span { display: flex; justify-content: flex-end; white-space: nowrap; }
.panels { display: flex; align-items: center; gap: 10px; height: 50px; background: #f7f7fc; padding: 0 0 4px 6px; box-sizing: border-box; white-space: nowrap; margin-bottom: 6px; font-size: 21px; }
.panels a { display: flex; align-items: center; gap: 8px; }
.panels .tight { gap: 3px; }
.props { height: 418px; }
.strip { height: 48px; width: 361px; margin-top: 1px; background: #f7f7fc; }
.marks { display: flex; align-items: center; gap: 18px; height: 72px; }
.marks text { font: bold 14px "Liberation Sans Narrow", "Liberation Sans", sans-serif; fill: #666; }
.xyz { border: 2px solid #aaa; background: #f2f2e4; color: #5b5b1c; font: bold 14px/18px "Liberation Sans Narrow", "Liberation Sans", sans-serif; }
.muted { padding-top: 38px; color: #4a5560; margin-left: -2px; }
.conn { padding-top: 57px; }
.default { display: flex; align-items: center; gap: 8px; margin: 14px 0 0 17px; height: 34px; }
.default svg { margin-right: 4px; }

.defn { width: 567px; margin-left: 7px; flex: none; display: flex; flex-direction: column; background: #f2f2f2; }
.tray { display: flex; align-items: center; justify-content: flex-end; gap: 6px; height: 38px; padding-right: 3px; border-top: 1px solid #fff; }
.slot { width: 480px; height: 30px; box-sizing: border-box; border: 1px solid #f7f7f7; background: #f0f0f0; }
.cog { width: 34px; height: 32px; border-color: #555; display: flex; align-items: center; justify-content: center; }
.cog svg { fill: none; stroke: #333; stroke-width: 1; }
.list { flex: 1; background: #fff; border: 1px solid #a0a0a0; }
.detail { height: 397px; margin-top: 8px; background: #f8f8f8; border: 1px solid #e6e6e6; border-bottom: 0; }

.view { flex: 1; min-width: 0; margin: 4px 0 0 11px; border: 1px solid #a5a58c; border-right: 0; border-bottom: 0; box-shadow: inset 1px 1px #eeeed2; position: relative; }
.prompt { font-size: 26px; line-height: 30px; color: #6e6e6e; padding: 17px 0 0 20px; }
.guides { padding: 8px 0 0 13px; }
.line { display: flex; align-items: flex-start; gap: 8px; height: 63px; }
.guide { border: 1px solid #6a6a6a; border-radius: 6px; background: #fff; display: flex; }
.guide svg { width: 100%; height: 100%; }
.sm { width: 32px; height: 32px; }
.md { width: 40px; height: 40px; }
.lg { width: 48px; height: 48px; border-radius: 8px; }
.off { opacity: .25; }
.faint { opacity: .08; }
.model { position: absolute; left: 320px; top: 554px; width: 760px; height: 350px; }
.triad { position: absolute; right: 30px; bottom: 25px; width: 160px; height: 150px; }
.triad text { font: bold 20px "Noto Sans", sans-serif; text-anchor: middle; }
.tip { position: absolute; left: 85px; top: 186px; width: 215px; height: 195px; box-sizing: border-box; border: 1px solid #555; background: #f7f7fc; box-shadow: 2px 2px 1px #999; padding: 2px 6px; }
.tip strong { font-size: 20px; line-height: 24px; }
.tip div { display: flex; gap: 20px; padding-top: 5px; }
.tip svg { margin-top: 2px; }
.tip p { font-size: 21px; line-height: 24px; width: 136px; }
.badge { position: absolute; width: 40px; height: 40px; border-radius: 50%; background: #fb4346; color: #fff; font: 28px/40px "Open Sans", sans-serif; text-align: center; box-shadow: 1px 3px 4px #888; }
.four { left: 94px; top: 107px; }
.five { left: 1014px; top: 667px; }
</style>
